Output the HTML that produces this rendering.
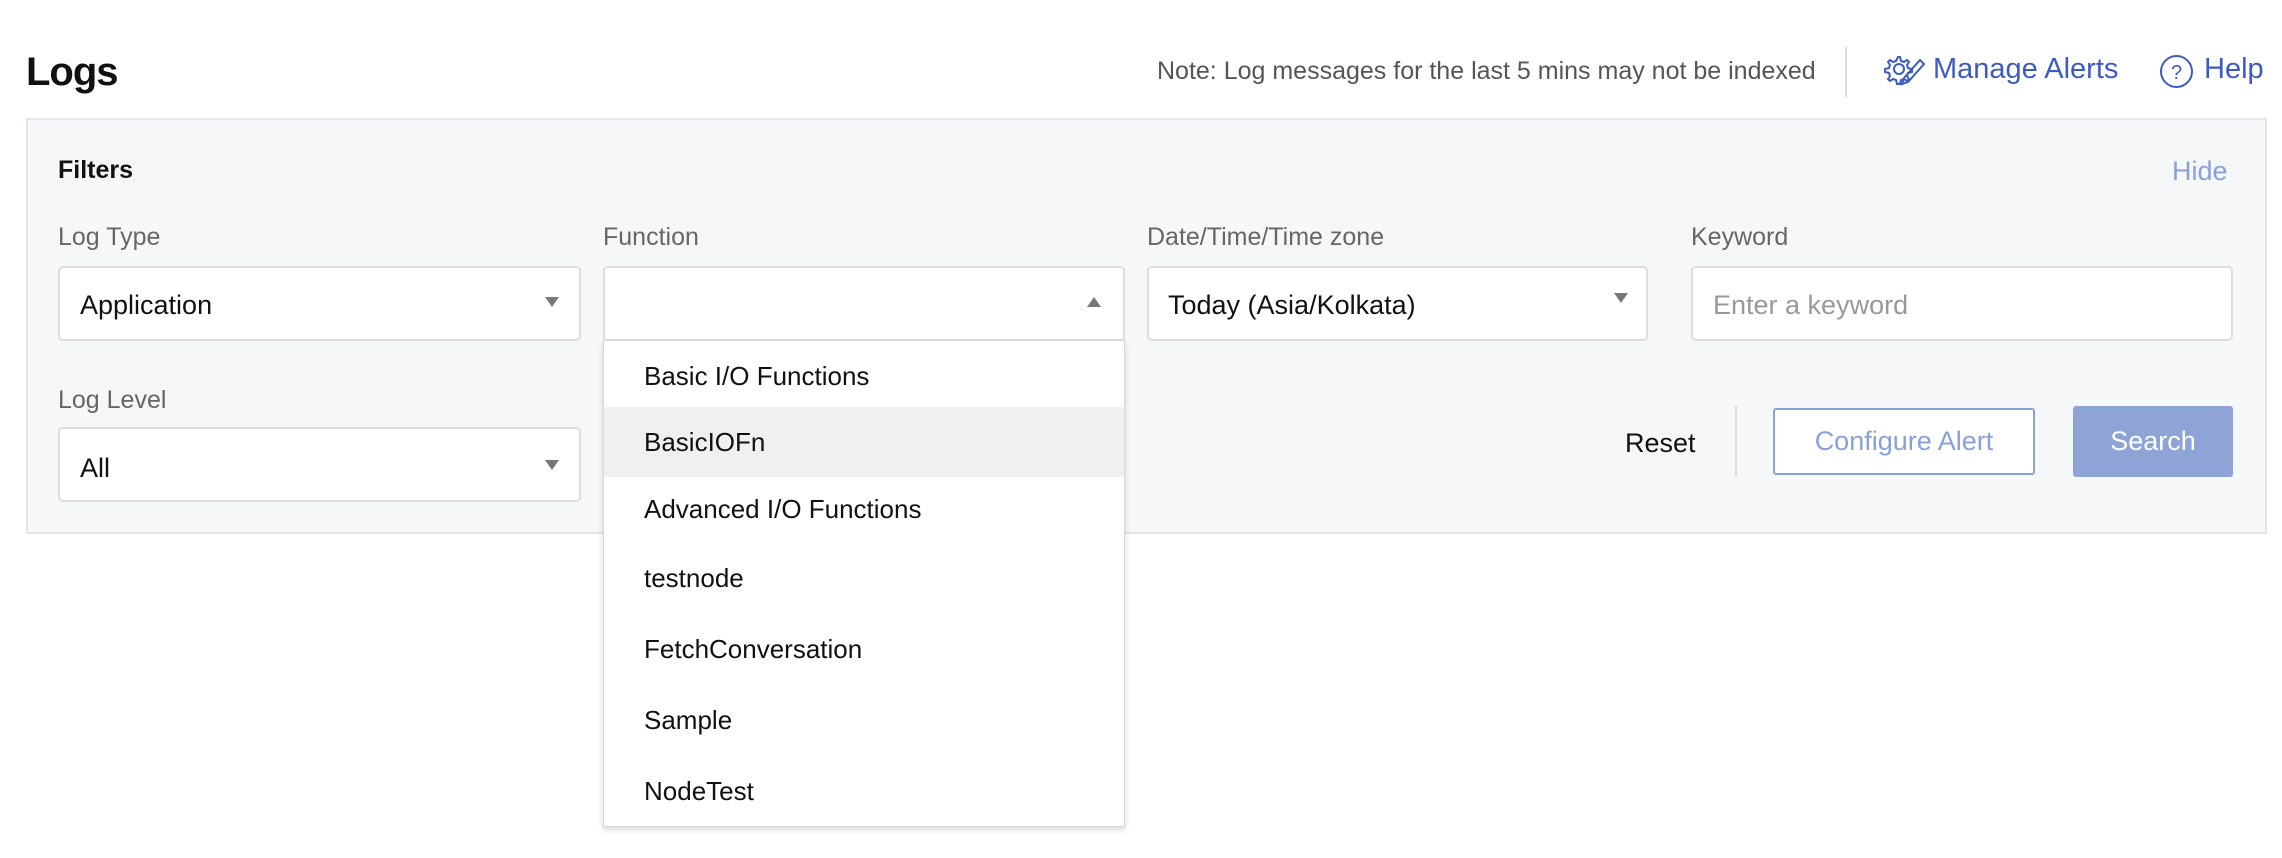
<!DOCTYPE html>
<html><head><meta charset="utf-8"><style>
*{margin:0;padding:0;box-sizing:border-box}
body{width:2282px;height:858px;background:#fff;font-family:"Liberation Sans",sans-serif;position:relative;overflow:hidden;color:#111}
.a{position:absolute;white-space:nowrap}
.box{position:absolute;background:#fff;border:2px solid #dcdde2;border-radius:5px}
.lbl{position:absolute;font-size:25px;color:#666;line-height:1}
.val{position:absolute;font-size:27px;color:#111;line-height:1}
.arr{position:absolute;width:0;height:0;border-left:7px solid transparent;border-right:7px solid transparent}
.dn{border-top:10px solid #777}
.up{border-bottom:10px solid #777}
.item{position:absolute;left:0;width:100%;height:70px;font-size:26px;line-height:70px;padding-left:40px;color:#111}
</style></head><body>
<div class="a" style="left:26px;top:50px;font-size:40px;font-weight:bold;line-height:1.1;letter-spacing:-1px">Logs</div>
<div class="a" style="left:1157px;top:59px;font-size:25px;color:#555;line-height:1">Note: Log messages for the last 5 mins may not be indexed</div>
<div class="a" style="left:1845px;top:47px;width:2px;height:50px;background:#ddd"></div>
<svg class="a" style="left:1884px;top:54px" width="42" height="34" viewBox="0 0 42 34" fill="none" stroke="#3d5bc0" stroke-width="2">
<path d="M14 3l2 0 1 4 3 1 3-2 2 2-2 3 1 3 4 1v3l-4 1-1 3 2 3-2 2-3-2-3 1-1 4h-3l-1-4-3-1-3 2-2-2 2-3-1-3-4-1v-3l4-1 1-3-2-3 2-2 3 2 3-1z"/>
<circle cx="15" cy="15" r="5"/>
<path d="M36 6l4 4-16 18-6 2 2-6z"/></svg>
<div class="a" style="left:1933px;top:55px;font-size:29px;color:#3d5bc0;line-height:1">Manage Alerts</div>
<svg class="a" style="left:2159px;top:54px" width="35" height="35" viewBox="0 0 35 35"><circle cx="17.5" cy="17.5" r="15.5" fill="none" stroke="#3d5bc0" stroke-width="2"/><text x="17.5" y="25" text-anchor="middle" font-size="20" fill="#3d5bc0" font-family="Liberation Sans">?</text></svg>
<div class="a" style="left:2204px;top:55px;font-size:29px;color:#3d5bc0;line-height:1">Help</div>

<div class="a" style="left:26px;top:118px;width:2241px;height:416px;background:#f6f7f9;border:2px solid #e3e5ea"></div>
<div class="a" style="left:58px;top:158px;font-size:25px;font-weight:bold;line-height:1">Filters</div>
<div class="a" style="left:2172px;top:158px;font-size:27px;color:#8aa0d8;line-height:1">Hide</div>

<div class="lbl" style="left:58px;top:225px">Log Type</div>
<div class="lbl" style="left:603px;top:225px">Function</div>
<div class="lbl" style="left:1147px;top:225px">Date/Time/Time zone</div>
<div class="lbl" style="left:1691px;top:225px">Keyword</div>

<div class="box" style="left:58px;top:266px;width:523px;height:75px"></div>
<div class="val" style="left:80px;top:292px">Application</div>
<div class="arr dn" style="left:545px;top:297px"></div>

<div class="box" style="left:603px;top:266px;width:522px;height:75px;border-radius:5px 5px 0 0"></div>
<div class="arr up" style="left:1087px;top:297px"></div>

<div class="box" style="left:1147px;top:266px;width:501px;height:75px"></div>
<div class="val" style="left:1168px;top:292px">Today (Asia/Kolkata)</div>
<div class="arr dn" style="left:1614px;top:293px"></div>

<div class="box" style="left:1691px;top:266px;width:542px;height:75px"></div>
<div class="val" style="left:1713px;top:292px;color:#999">Enter a keyword</div>

<div class="lbl" style="left:58px;top:388px">Log Level</div>
<div class="box" style="left:58px;top:427px;width:523px;height:75px"></div>
<div class="val" style="left:80px;top:455px">All</div>
<div class="arr dn" style="left:545px;top:460px"></div>

<div class="a" style="left:1625px;top:430px;font-size:27px;line-height:1">Reset</div>
<div class="a" style="left:1735px;top:406px;width:2px;height:70px;background:#ddd"></div>
<div class="a" style="left:1773px;top:408px;width:262px;height:67px;border:2px solid #8aa0d8;border-radius:3px;font-size:27px;color:#8aa0d8;text-align:center;line-height:63px;background:#fff">Configure Alert</div>
<div class="a" style="left:2073px;top:406px;width:160px;height:71px;background:#8ea3d6;border-radius:3px;font-size:27px;color:#fff;text-align:center;line-height:71px">Search</div>

<div class="a" style="left:603px;top:340px;width:522px;height:487px;background:#fff;border:1px solid #d8d8d8;box-shadow:0 3px 6px rgba(0,0,0,.15)">
<div class="item" style="top:0">Basic I/O Functions</div>
<div class="item" style="top:66px;background:#f0f0f0">BasicIOFn</div>
<div class="item" style="top:133px">Advanced I/O Functions</div>
<div class="item" style="top:202px">testnode</div>
<div class="item" style="top:273px">FetchConversation</div>
<div class="item" style="top:344px">Sample</div>
<div class="item" style="top:415px">NodeTest</div>
</div>
</body></html>
